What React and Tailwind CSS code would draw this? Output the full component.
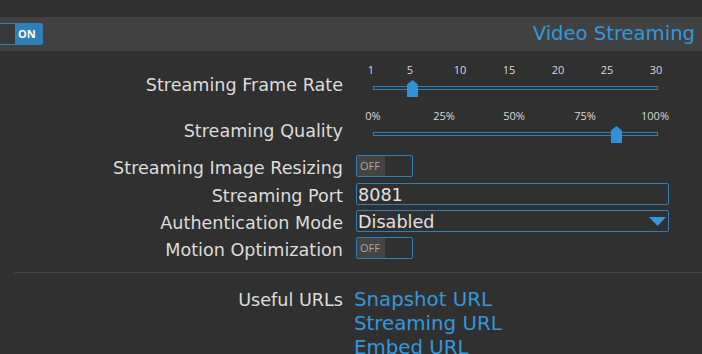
import React from "react";

const font = { fontFamily: '"DejaVu Sans", "Open Sans", sans-serif' };
const tickFont = { fontFamily: '"Open Sans", sans-serif' };

function Handle({ left }) {
  return (
    <svg
      width="11"
      height="17"
      viewBox="0 0 11 17"
      className="absolute top-[-7px]"
      style={{ left: left - 5.5 }}
    >
      <polygon points="5.5,0 11,4.5 11,17 0,17 0,4.5" fill="#3090d8" />
    </svg>
  );
}

function Slider({ ticks, handle }) {
  return (
    <div className="relative ml-[17px] w-[285px] h-[46px]" style={tickFont}>
      {ticks.map(([label, x]) => (
        <span
          key={label}
          className="absolute top-0 h-[16px] leading-[16px] text-[11px] text-[#d8d8d8] -translate-x-1/2"
          style={{ left: x }}
        >
          {label}
        </span>
      ))}
      <div className="absolute top-[24px] left-0 w-[285px] h-[4px] border border-[#3080b8]">
        <Handle left={handle} />
      </div>
    </div>
  );
}

function Toggle() {
  return (
    <div className="flex w-[57px] h-[22px] border border-[#3080b8] rounded-[2px] overflow-hidden" style={tickFont}>
      <div className="w-[28px] h-full bg-[#444444] text-[11px] leading-[20px] text-[#a8a8a8] pl-[3px]">
        OFF
      </div>
    </div>
  );
}

function Label({ children, className = "" }) {
  return (
    <div className={`w-[343px] shrink-0 text-right text-[17.6px] text-[#dcdcdc] whitespace-nowrap ${className}`}>
      {children}
    </div>
  );
}

function Row({ label, children, mt }) {
  return (
    <div className={`${mt} flex h-[22px] items-start gap-[13px]`}>
      <Label className="h-[22px] leading-[26px]">{label}</Label>
      {children}
    </div>
  );
}

export default function App() {
  return (
    <div
      className="w-[702px] h-[354px] overflow-hidden bg-[#303030] text-[#dcdcdc]"
      style={font}
    >
      <div className="h-[17px]" />
      <div className="h-[34px] bg-[#414141] flex items-center justify-between pr-[7px]">
        <div className="ml-[-13px] flex w-[56px] h-[22px] border border-[#3080b8] rounded-[2px] overflow-hidden" style={tickFont}>
          <div className="w-[27px] h-full bg-[#383838]" />
          <div className="flex-1 bg-[#3080b8] text-white font-bold text-[11px] leading-[20px] pl-[3px]">
            ON
          </div>
        </div>
        <div className="text-[19.6px] text-[#3498db] leading-none">Video Streaming</div>
      </div>

      <div className="mt-[11px] flex h-[46px] gap-[13px]">
        <div className="pt-[10px]">
          <Label>Streaming Frame Rate</Label>
        </div>
        <Slider
          ticks={[["1", -2], ["5", 37], ["10", 87], ["15", 136], ["20", 185], ["25", 234], ["30", 283]]}
          handle={38}
        />
      </div>

      <div className="flex h-[46px] gap-[13px]">
        <div className="pt-[10px]">
          <Label>Streaming Quality</Label>
        </div>
        <Slider
          ticks={[["0%", 0], ["25%", 71], ["50%", 141], ["75%", 212], ["100%", 282]]}
          handle={242}
        />
      </div>

      <Row label="Streaming Image Resizing" mt="mt-[1px]">
        <Toggle />
      </Row>

      <Row label="Streaming Port" mt="mt-[6px]">
        <div className="w-[313px] h-[22px] border border-[#3080b8] rounded-[2px] text-[17.6px] leading-[23px] pl-[1px] text-[#e0e0e0] overflow-hidden">
          8081
        </div>
      </Row>

      <Row label="Authentication Mode" mt="mt-[5px]">
        <div className="relative w-[313px] h-[22px] border border-[#3080b8] rounded-[2px] text-[17.6px] leading-[23px] pl-[1px] text-[#e0e0e0]">
          Disabled
          <svg width="17" height="9" viewBox="0 0 17 9" className="absolute right-[2px] top-[6px]">
            <polygon points="0,0 17,0 8.5,9" fill="#3498db" />
          </svg>
        </div>
      </Row>

      <Row label="Motion Optimization" mt="mt-[5px]">
        <Toggle />
      </Row>

      <div className="mt-[13px] ml-[14px] border-t border-[#444444]" />

      <div className="mt-[15px] flex gap-[11px] leading-[24px]">
        <Label>Useful URLs</Label>
        <div className="flex flex-col text-[#3498db] text-[19.8px] leading-[24px]">
          <span>Snapshot URL</span>
          <span>Streaming URL</span>
          <span>Embed URL</span>
        </div>
      </div>
    </div>
  );
}
